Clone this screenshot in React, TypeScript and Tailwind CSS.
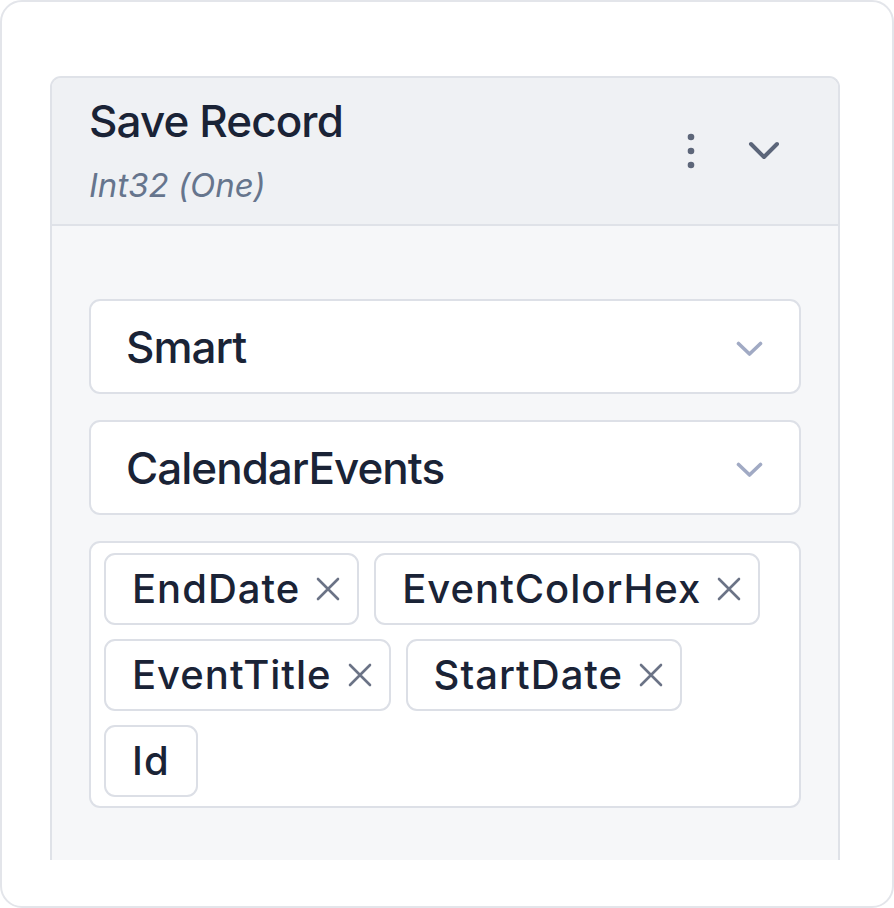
import React from 'react';

const Kebab = () => (
  <svg width="10" height="38" viewBox="0 0 10 38" fill="#5d6679">
    <circle cx="5" cy="5" r="3.3" />
    <circle cx="5" cy="19" r="3.3" />
    <circle cx="5" cy="33" r="3.3" />
  </svg>
);

const HeaderChevron = () => (
  <svg width="32" height="20" viewBox="0 0 32 20" fill="none">
    <path d="M3 3 L16 16 L29 3" stroke="#5b6579" strokeWidth="4" strokeLinecap="round" strokeLinejoin="round" />
  </svg>
);

const SelectChevron = () => (
  <svg width="27" height="16" viewBox="0 0 27 16" fill="none">
    <path d="M2.5 2.5 L13.5 13 L24.5 2.5" stroke="#a1aac4" strokeWidth="3.6" strokeLinecap="round" strokeLinejoin="round" />
  </svg>
);

const CloseIcon = () => (
  <svg width="24" height="24" viewBox="0 0 24 24" fill="none">
    <path d="M2 2 L22 22 M22 2 L2 22" stroke="#6b7386" strokeWidth="2.6" strokeLinecap="round" />
  </svg>
);

const Select = ({ value }: { value: string }) => (
  <div className="flex items-center justify-between h-[95px] bg-white border-2 border-[#dde0e7] rounded-[11px] pl-[35px] pr-[36px]">
    <span className="text-[44px] font-medium tracking-[-1px] text-[#1a2336] leading-none">{value}</span>
    <span className="mt-[4px]">
      <SelectChevron />
    </span>
  </div>
);

const Tag = ({ label, removable = true }: { label: string; removable?: boolean }) => (
  <div className="flex items-center h-[72px] bg-white border-2 border-[#dcdfe6] rounded-[11px] px-[26px]">
    <span className="text-[40px] font-medium tracking-[1px] text-[#1a2336] leading-none">{label}</span>
    {removable && (
      <span className="ml-[16px] -mr-[9px] flex items-center">
        <CloseIcon />
      </span>
    )}
  </div>
);

export default function App() {
  const fields = ['EndDate', 'EventColorHex', 'EventTitle', 'StartDate'];

  return (
    <div className="w-[894px] h-[908px] bg-white font-['Inter',sans-serif]">
      <div className="h-full border-2 border-[#e3e5ea] rounded-[22px] pl-[48px] pr-[52px] pt-[74px]">
        <div className="h-[784px] border-2 border-b-0 border-[#dfe2e8] rounded-t-[11px] bg-[#f6f7f9] overflow-hidden">
          <div className="flex items-center justify-between bg-[#eff1f4] border-b-2 border-[#dfe2e8] pl-[37px] pr-[58px] pt-[13px] pb-[17px]">
            <div className="flex flex-col">
              <span className="text-[44px] leading-[60px] font-medium tracking-[-0.9px] text-[#1a2336]">Save Record</span>
              <span className="text-[33px] leading-[44px] italic text-[#66758d] mt-[12px]">Int32 (One)</span>
            </div>
            <div className="flex items-center gap-[52px] mt-[3px]">
              <Kebab />
              <HeaderChevron />
            </div>
          </div>
          <div className="flex flex-col gap-[26px] px-[37px] pt-[73px]">
            <Select value="Smart" />
            <Select value="CalendarEvents" />
            <div className="flex flex-wrap gap-x-[15px] gap-y-[14px] bg-white border-2 border-[#dde0e7] rounded-[11px] pl-[13px] pr-[30px] pt-[10px] pb-[9px]">
              {fields.map((f) => (
                <Tag key={f} label={f} />
              ))}
              <Tag label="Id" removable={false} />
            </div>
          </div>
        </div>
      </div>
    </div>
  );
}
